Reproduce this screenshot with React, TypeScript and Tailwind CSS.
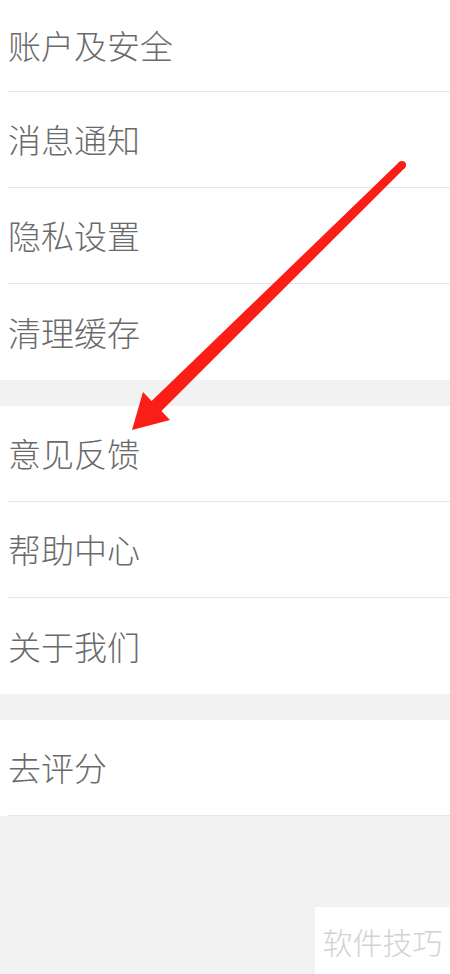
import React from "react";

const groups: Array<{ items: string[]; lastLine: boolean }> = [
  { items: ["账户及安全", "消息通知", "隐私设置", "清理缓存"], lastLine: false },
  { items: ["意见反馈", "帮助中心", "关于我们"], lastLine: false },
  { items: ["去评分"], lastLine: true },
];

const font = { fontFamily: '"Noto Sans CJK SC", "Noto Sans", sans-serif' };

function Row({ label, line, first }: { label: string; line: boolean; first: boolean }) {
  return (
    <div className="bg-white pl-2">
      <div
        className={`flex items-center text-[33px] font-light text-[#6a6a6a] ${first ? "h-[92px]" : "h-[96px]"} ${
          line ? "border-b border-[#e6e6e6]" : ""
        }`}
      >
        <span className="leading-none">{label}</span>
      </div>
    </div>
  );
}

export default function App() {
  return (
    <div className="relative w-[450px] h-[974px] overflow-hidden bg-[#f2f2f2]" style={font}>
      <div className="flex flex-col gap-[26px]">
        {groups.map((g, gi) => (
          <div key={gi} className="flex flex-col">
            {g.items.map((item, i) => (
              <Row
                key={item}
                label={item}
                first={gi === 0 && i === 0}
                line={i < g.items.length - 1 || g.lastLine}
              />
            ))}
          </div>
        ))}
      </div>

      {/* annotation arrow */}
      <svg className="absolute inset-0 pointer-events-none" width="450" height="974" viewBox="0 0 450 974">
        <polygon
          fill="#fa1e16"
          points="404.8,167.9 161.4,411 170,420 132,430 143,392 151.6,401 399.2,162.1"
        />
        <circle cx="402" cy="165" r="4" fill="#fa1e16" />
      </svg>

      <div className="absolute right-0 bottom-0 w-[135px] h-[67px] bg-white flex items-center justify-center">
        <span className="text-[30px] font-light leading-none text-[#d2d2d2]">软件技巧</span>
      </div>
    </div>
  );
}
